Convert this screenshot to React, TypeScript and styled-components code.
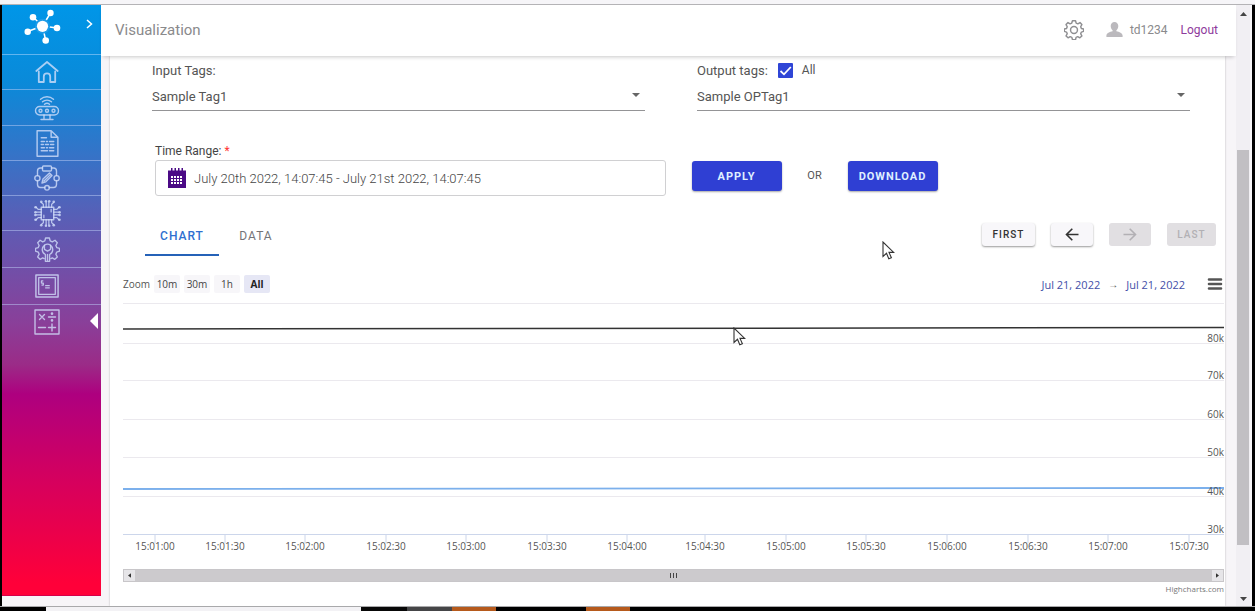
import React from "react";
import styled, { createGlobalStyle, css } from "styled-components";

const GlobalStyle = createGlobalStyle`
  *, *::before, *::after { box-sizing: border-box; }
  body { margin: 0; background: #f7f5f8; font-family: Roboto, "Liberation Sans", sans-serif; }
  button, input, select { font-family: inherit; margin: 0; }
  a { text-decoration: none; }
`;

const chartFont = css`
  font-family: "Open Sans", "Noto Sans", sans-serif;
`;

const Screen = styled.div`
  position: relative;
  display: flex;
  flex-direction: column;
  min-height: 100vh;
  color: #555;
`;

const TopEdge = styled.div`
  height: 5px;
  background: #f6f5f8;
  border-bottom: 1px solid #b4b3b6;
`;

const Frame = styled.div`
  flex: 1;
  display: flex;
  border-left: 2px solid #000;
  border-right: 3px solid #000;
`;

const BottomEdge = styled.div`
  display: flex;
  height: 5px;
  background: #000;
  border-top: 1px solid #a9a9ab;
`;

const Segment = styled.span<{ $w: number; $c: string }>`
  width: ${(p) => p.$w}px;
  background: ${(p) => p.$c};
`;

/* ---------- sidebar ---------- */

const Sidebar = styled.nav`
  width: 99px;
  flex: none;
  margin-bottom: 10px;
  border-bottom: 1px solid #d4004a;
  background: linear-gradient(
    180deg,
    #0096e8 0%,
    #0a8ad9 13%,
    #3474c8 25%,
    #5f5bb3 38%,
    #8a3f99 54%,
    #9b2b87 61%,
    #ae007f 66%,
    #d4005f 80%,
    #ff0039 98%
  );
`;

const Brand = styled.div`
  display: flex;
  align-items: flex-start;
  justify-content: space-between;
  height: 50px;
  padding: 2px 8px 0 20px;
  border-bottom: 1px solid rgba(190, 220, 255, 0.5);
`;

const ExpandButton = styled.button`
  display: flex;
  padding: 12px 0;
  border: 0;
  background: none;
  color: #fff;
`;

const NavItem = styled.a<{ $h?: number; $active?: boolean }>`
  position: relative;
  display: flex;
  align-items: center;
  justify-content: center;
  height: ${(p) => p.$h ?? 35}px;
  padding-right: 9px;
  border-bottom: ${(p) => (p.$active ? "0" : "1px solid rgba(190, 205, 245, 0.5)")};
  color: rgba(210, 222, 250, 0.8);
`;

const ActiveMark = styled.span`
  position: absolute;
  right: 3px;
  top: 8px;
  border: solid transparent;
  border-width: 8px 8px 8px 0;
  border-right-color: #fff;
`;

const Icon = ({ children, size = 26 }: { children: React.ReactNode; size?: number }) => (
  <svg
    width={size}
    height={size}
    viewBox="0 0 26 26"
    fill="none"
    stroke="currentColor"
    strokeWidth="1.4"
    strokeLinejoin="round"
    strokeLinecap="round"
    aria-hidden="true"
  >
    {children}
  </svg>
);

const HomeIcon = () => (
  <Icon>
    <path d="M2.300 12 13 3l10.700 9" strokeWidth="1.800" />
    <path d="M4.800 12.500V23h5v-5.500a3.200 3.200 0 0 1 6.400 0V23h5V12.500" strokeWidth="1.800" />
  </Icon>
);
const RobotIcon = () => (
  <Icon>
    <path d="M6.500 4.200a10 10 0 0 1 13 0M8.500 6.800a7 7 0 0 1 9 0M10.500 9.200a4 4 0 0 1 5 0" />
    <rect x="1.500" y="11.500" width="23" height="8.500" rx="4.200" />
    <circle cx="6.500" cy="15.700" r="1.500" />
    <circle cx="13" cy="15.700" r="1.500" />
    <circle cx="19.500" cy="15.700" r="1.500" />
    <path d="M10 20v4M16 20v4M7 24.500h12" />
  </Icon>
);
const DocumentIcon = () => (
  <Icon size={27}>
    <path d="M3 .8h13.500L23 7v18.200H3zM16.500 .8V7H23" />
    <path d="M7 7.500h5M7 11h3m2 0h1m2 0h4M7 14h2m2 0h3m2 0h3M7 17h3m2 0h1m2 0h4M7 20h6m2 0h4" />
  </Icon>
);
const DesignIcon = () => (
  <Icon>
    <rect x="8.500" y="1" width="9" height="5" rx="1" />
    <path d="M8.500 3H6.500Q3.500 3 3.500 6v4.500M17.500 3h2q3 0 3 3v4.500M3.500 16v3.500q0 3 3 3h4.300M22.500 16v3.500q0 3-3 3h-4.300" />
    <circle cx="3.400" cy="13.200" r="2.600" />
    <circle cx="22.600" cy="13.200" r="2.600" />
    <circle cx="13" cy="22.800" r="2.300" />
    <path d="m8 18 1-4 6.500-6 2.500 2.500-6.200 6.300zM10 16l6-6" />
  </Icon>
);
const ChipIcon = () => (
  <Icon size={27}>
    <rect x="7" y="7" width="12" height="12" />
    <path d="M9 7V4L7 2.500M11.700 7V2M14.300 7V2M17 7V4l2-1.500M9 19v3l-2 1.500M11.700 19v5M14.300 19v5M17 19v3l2 1.500M7 9H4L2 7M7 11.700H2M7 14.300H2M7 17H4l-2 2M19 9h3l2-2M19 11.700h5M19 14.300h5M19 17h3l2 2M16.500 9v2.500M9.500 17v-2.500" strokeWidth="1.200" />
    <g fill="currentColor" stroke="none">
      <circle cx="7" cy="1.700" r="1.300" /><circle cx="11.500" cy="1.300" r="1.200" /><circle cx="14.700" cy="1.300" r="1.200" /><circle cx="19" cy="1.700" r="1.300" />
      <circle cx="7" cy="24.300" r="1.300" /><circle cx="11.500" cy="24.700" r="1.200" /><circle cx="14.700" cy="24.700" r="1.200" /><circle cx="19" cy="24.300" r="1.300" />
      <circle cx="1.500" cy="7" r="1.300" /><circle cx="1.300" cy="11.700" r="1.200" /><circle cx="1.300" cy="14.500" r="1.200" /><circle cx="1.500" cy="19" r="1.300" />
      <circle cx="24.500" cy="7" r="1.300" /><circle cx="24.700" cy="11.700" r="1.200" /><circle cx="24.700" cy="14.500" r="1.200" /><circle cx="24.500" cy="19" r="1.300" />
    </g>
  </Icon>
);
const gearPath =
  "M11 1h4l.8 3 2.200 1 2.800-1.600 2.400 2.600-1.500 2.800.9 2.200 2.900.8v3l-2.900.9-.9 2.200 1.500 2.800-2.600 2.500-2.700-1.500-2.200.9-.7 2.900h-4l-.8-2.900-2.200-.9-2.700 1.500-2.600-2.500 1.500-2.800-.9-2.200-2.900-.9v-3l2.900-.8.9-2.200-1.500-2.800 2.500-2.600 2.700 1.600 2.200-1z";
const ServiceIcon = () => (
  <Icon size={25}>
    <path d="M9.500 22.500 8 21.800l-2.700 1.400-2.500-2.500 1.500-2.800-.9-2.200-2.900-.9v-3l2.900-.8.9-2.200-1.500-2.800 2.500-2.600L8 5l2.200-1L11 1h4l.8 3L18 5l2.800-1.600 2.400 2.600-1.500 2.800.9 2.200 2.900.8v3l-2.900.9-.9 2.200 1.500 2.800-2.600 2.500L18 21.800l-1.500.7" />
    <path d="M10.800 25.300v-7.100a5.700 5.700 0 0 1-1-9.700v4.300l3.200 1.800 3.200-1.800V8.500a5.700 5.700 0 0 1-1 9.700v7.100zM13 18v7" />
    <path d="M9.800 8.500a5.500 5.500 0 0 1 6.400 0" />
  </Icon>
);
const ConsoleIcon = () => (
  <Icon size={24}>
    <rect x="1" y="1" width="24" height="24" strokeWidth="1.600" />
    <rect x="4" y="4" width="18" height="18" />
    <path d="M9 7.500H7v2.300h2V12H7M11 12.500h5M11 15h5" strokeLinecap="butt" />
  </Icon>
);
const CalcIcon = () => (
  <Icon>
    <rect x="1" y="1" width="24" height="24" />
    <path d="m5.500 5.500 5 5m0-5-5 5M14.500 8h7M4.500 18.500h7M14.500 18.500h7M18 15v7" />
    <path d="M18 4.500v.3M18 11.200v.3" strokeWidth="2.600" />
  </Icon>
);

/* ---------- header ---------- */

const Main = styled.div`
  flex: 1;
  min-width: 0;
  display: flex;
  flex-direction: column;
`;

const Header = styled.header`
  position: relative;
  display: flex;
  align-items: center;
  height: 51px;
  padding: 0 18px 2px 14px;
  background: #fff;
  box-shadow: 0 3px 4px -2px rgba(0, 0, 0, 0.22);
  color: #8a8a8c;
`;

const Title = styled.h1`
  flex: 1;
  margin: 0;
  font-size: 15px;
  font-weight: 400;
  line-height: 20px;
`;

const IconButton = styled.button`
  display: flex;
  padding: 0;
  border: 0;
  background: none;
  color: #8f8f92;
`;

const User = styled.span`
  display: flex;
  align-items: center;
  gap: 7px;
  margin: 0 13px 0 22px;
  font-size: 12px;
`;

const Logout = styled.a`
  font-size: 12px;
  color: #8e3a9c;
`;

/* ---------- form ---------- */

const Card = styled.main`
  flex: 1;
  margin: 0 11px 0 9px;
  padding-top: 4px;
  background: #fff;
  box-shadow: 0 0 2px rgba(0, 0, 0, 0.25);
`;

const TagGrid = styled.div`
  display: grid;
  grid-template-columns: 1fr 1fr;
  gap: 52px;
  padding: 0 35px 0 42px;
`;

const LabelRow = styled.div`
  display: flex;
  align-items: center;
  height: 20px;
  font-size: 13px;
`;

const Check = styled.input`
  appearance: none;
  width: 15px;
  height: 15px;
  margin: 0 9px 0 10px;
  border-radius: 1px;
  background: #2f45d6
    url("data:image/svg+xml,%3Csvg xmlns='http://www.w3.org/2000/svg' viewBox='0 0 15 15'%3E%3Cpath d='M2.500 8 6 11.300 12.800 4' fill='none' stroke='white' stroke-width='1.800'/%3E%3C/svg%3E");
`;

const CheckLabel = styled.label`
  font-size: 12px;
`;

const SelectWrap = styled.div`
  display: flex;
  align-items: center;
  height: 31px;
  border-bottom: 1px solid #949496;
`;

const Select = styled.select`
  flex: 1;
  appearance: none;
  height: 30px;
  padding: 2px 0 0;
  border: 0;
  background: transparent url("data:image/svg+xml,%3Csvg xmlns='http://www.w3.org/2000/svg' viewBox='0 0 8 4'%3E%3Cpath d='M0 0h8L4 4z' fill='%23666'/%3E%3C/svg%3E")
    right 5px center / 8px 4px no-repeat;
  font-size: 13px;
  color: #555;
`;

const RangeSection = styled.section`
  padding: 31px 35px 0 45px;
`;

const RangeLabel = styled.label`
  display: block;
  font-size: 12px;
  line-height: 18px;
  color: #444;
`;

const Required = styled.span`
  color: #f33;
`;

const RangeRow = styled.div`
  display: flex;
  align-items: flex-start;
`;

const RangeBox = styled.div`
  display: flex;
  align-items: center;
  gap: 8px;
  width: calc(50% - 7px);
  height: 36px;
  margin-right: 26px;
  padding: 0 12px;
  border: 1px solid #d0d0d2;
  border-radius: 3px;
`;

const RangeInput = styled.input`
  flex: 1;
  min-width: 0;
  padding: 0;
  border: 0;
  background: none;
  font-size: 13px;
  font-weight: 300;
  color: #444;
`;

const Primary = styled.button`
  width: 90px;
  height: 30px;
  margin-top: 1px;
  padding: 0;
  border: 0;
  border-radius: 3px;
  background: #2f3fd3;
  box-shadow: 0 1px 2px rgba(0, 0, 0, 0.35);
  font-size: 11px;
  font-weight: 700;
  letter-spacing: 1px;
  color: #dff0ff;
`;

const Or = styled.span`
  width: 66px;
  text-align: center;
  font-size: 11px;
  line-height: 32px;
`;

/* ---------- tabs and paging ---------- */

const Toolbar = styled.div`
  display: flex;
  align-items: center;
  justify-content: space-between;
  margin-top: 20px;
  padding: 0 9px 0 35px;
`;

const Tabs = styled.div`
  display: flex;
`;

const Tab = styled.button<{ $on?: boolean }>`
  width: 74px;
  height: 40px;
  padding: 0;
  border: solid transparent;
  border-width: 2px 0;
  border-bottom-color: ${(p) => (p.$on ? "#2562b8" : "transparent")};
  background: none;
  font-size: 12px;
  font-weight: ${(p) => (p.$on ? 500 : 400)};
  letter-spacing: 1px;
  color: ${(p) => (p.$on ? "#2f6fd0" : "#747477")};
`;

const Pager = styled.div`
  display: flex;
  gap: 16px;
  margin-bottom: 4px;
`;

const PageButton = styled.button<{ $w: number }>`
  display: flex;
  align-items: center;
  justify-content: center;
  width: ${(p) => p.$w}px;
  height: 23px;
  padding: 0;
  border: 0;
  border-radius: 3px;
  background: #f8f7fa;
  box-shadow: 0 1px 2px rgba(0, 0, 0, 0.4);
  font-size: 10px;
  font-weight: 500;
  letter-spacing: 1px;
  color: #333;
  &:disabled {
    background: #e1dfe2;
    box-shadow: none;
    color: #b2b0b4;
  }
`;

/* ---------- chart ---------- */

const ChartSection = styled.section`
  padding: 19px 1px 0 13px;
  ${chartFont}
`;

const ChartControls = styled.div`
  display: flex;
  align-items: center;
  gap: 4px;
  height: 18px;
  font-size: 10px;
  color: #555;
`;

const ZoomButton = styled.button<{ $on?: boolean }>`
  width: 26px;
  height: 18px;
  padding: 0;
  border: 0;
  border-radius: 2px;
  background: ${(p) => (p.$on ? "#e6e7f5" : "#f7f6f9")};
  font-size: 10px;
  font-weight: ${(p) => (p.$on ? 700 : 400)};
  color: ${(p) => (p.$on ? "#222" : "#444")};
`;

const Dates = styled.div`
  display: flex;
  align-items: center;
  gap: 8px;
  margin-left: auto;
  margin-right: 18px;
`;

const DateText = styled.button`
  padding: 0;
  border: 0;
  background: none;
  font-size: 11px;
  color: #4450a8;
`;

const Plot = styled.svg`
  display: block;
  width: 100%;
  height: 265px;
  font-size: 10px;
  fill: #555;
`;

const Navigator = styled.div`
  display: flex;
  justify-content: space-between;
  align-items: center;
  height: 13px;
  margin-top: 11px;
  border: 1px solid #c8c6c9;
  background: #cccacd;
`;

const StepButton = styled.button`
  display: flex;
  align-items: center;
  justify-content: center;
  width: 11px;
  height: 11px;
  padding: 0;
  border: 0;
  background: #e6e5e8;
`;

const Credits = styled.a`
  display: block;
  text-align: right;
  font-size: 8px;
  line-height: 14px;
  color: #777;
`;

/* ---------- page scrollbar ---------- */

const Scrollbar = styled.div`
  display: flex;
  flex-direction: column;
  align-items: center;
  width: 14px;
  flex: none;
  margin-right: 2px;
  padding: 7px 0 5px;
  background: #f1eff3;
`;

const Track = styled.div`
  flex: 1;
  display: flex;
  flex-direction: column;
`;

const Thumb = styled.div`
  width: 12px;
  flex: 394;
  background: #c1bfc3;
`;

const Gap = styled.div<{ $f: number }>`
  flex: ${(p) => p.$f};
`;

const Cursor = styled.svg<{ $x: number; $y: number }>`
  position: absolute;
  left: ${(p) => p.$x}px;
  top: ${(p) => p.$y}px;
  pointer-events: none;
`;

const pct = (x: number) => `${((x - 123) / 1101) * 100}%`;

const ticks: [string, number][] = [
  ["15:01:00", 155], ["15:01:30", 225], ["15:02:00", 305], ["15:02:30", 386],
  ["15:03:00", 466], ["15:03:30", 547], ["15:04:00", 627], ["15:04:30", 705],
  ["15:05:00", 786], ["15:05:30", 866], ["15:06:00", 947], ["15:06:30", 1028],
  ["15:07:00", 1108], ["15:07:30", 1189],
];

const gridLines: [string, number][] = [
  ["", 10], ["80k", 50], ["70k", 87], ["60k", 126], ["50k", 164], ["40k", 203], ["30k", 241],
];

const Pointer = ({ x, y }: { x: number; y: number }) => (
  <Cursor $x={x} $y={y} width="13" height="20" viewBox="0 0 13 20" aria-hidden="true">
    <path d="M1 1v14.500l3.500-3.200 2.300 5.500 2.600-1.100-2.400-5.300h4.700z" fill="#fff" stroke="#333" strokeWidth="1.100" />
  </Cursor>
);

export default function App() {
  return (
    <Screen>
      <GlobalStyle />
      <TopEdge />
      <Frame>
        <Sidebar aria-label="Main">
          <Brand>
            <svg width="42" height="40" viewBox="0 0 42 40" aria-hidden="true">
              <path d="M20.500 19 28.500 6M20.500 19 11 10M20.500 19 5.500 24.500M20.500 19 35 21M20.500 19 23.700 33.500" stroke="#fff" strokeWidth="1.500" />
              <circle cx="20.500" cy="19.300" r="7.500" fill="#1c9ce8" />
              <g fill="#fff">
                <circle cx="20.500" cy="19.300" r="5.600" />
                <circle cx="28.500" cy="6" r="3.200" />
                <circle cx="11" cy="10.300" r="3.300" />
                <circle cx="5.700" cy="24.700" r="3.200" />
                <circle cx="35" cy="21" r="3.300" />
                <circle cx="23.700" cy="33.500" r="3.300" />
              </g>
            </svg>
            <ExpandButton aria-label="Expand menu">
              <svg width="7" height="10" viewBox="0 0 7 10"><path d="m1 1 4.500 4L1 9" fill="none" stroke="currentColor" strokeWidth="1.500" /></svg>
            </ExpandButton>
          </Brand>
          <NavItem href="#home" aria-label="Home"><HomeIcon /></NavItem>
          <NavItem $h={36} href="#devices" aria-label="Devices"><RobotIcon /></NavItem>
          <NavItem href="#reports" aria-label="Reports"><DocumentIcon /></NavItem>
          <NavItem href="#design" aria-label="Design"><DesignIcon /></NavItem>
          <NavItem href="#models" aria-label="Models"><ChipIcon /></NavItem>
          <NavItem $h={37} href="#service" aria-label="Service"><ServiceIcon /></NavItem>
          <NavItem $h={37} href="#console" aria-label="Console"><ConsoleIcon /></NavItem>
          <NavItem $h={33} $active href="#visualization" aria-label="Visualization">
            <CalcIcon />
            <ActiveMark />
          </NavItem>
        </Sidebar>

        <Main>
          <Header>
            <Title>Visualization</Title>
            <IconButton aria-label="Settings">
              <svg width="20" height="20" viewBox="0 0 26 26" fill="none" stroke="currentColor" strokeWidth="1.900" strokeLinejoin="round">
                <path d={gearPath} />
                <circle cx="13" cy="13" r="4.500" />
              </svg>
            </IconButton>
            <User>
              <svg width="17" height="15" viewBox="0 0 17 15" fill="#bbb9bd" aria-hidden="true">
                <path d="M8.500 0c2.300 0 3.800 1.700 3.800 4 0 1.700-.8 3.300-1.900 4.200v1c2.800.7 6.200 1.600 6.200 4.400V15H.4v-1.400c0-2.800 3.400-3.700 6.200-4.400v-1C5.500 7.300 4.700 5.700 4.700 4c0-2.300 1.500-4 3.800-4z" />
              </svg>
              td1234
            </User>
            <Logout href="#logout">Logout</Logout>
          </Header>

          <Card>
            <TagGrid>
              <div>
                <LabelRow><label htmlFor="input-tag">Input Tags:</label></LabelRow>
                <SelectWrap>
                  <Select id="input-tag"><option>Sample Tag1</option></Select>
                </SelectWrap>
              </div>
              <div>
                <LabelRow>
                  <label htmlFor="output-tag">Output tags:</label>
                  <Check id="all-tags" type="checkbox" defaultChecked />
                  <CheckLabel htmlFor="all-tags">All</CheckLabel>
                </LabelRow>
                <SelectWrap>
                  <Select id="output-tag"><option>Sample OPTag1</option></Select>
                </SelectWrap>
              </div>
            </TagGrid>

            <RangeSection>
              <RangeLabel htmlFor="range">Time Range: <Required>*</Required></RangeLabel>
              <RangeRow>
                <RangeBox>
                  <svg width="18" height="20" viewBox="0 0 18 20" aria-hidden="true">
                    <path d="M0 2.500h18V20H0zM3 0h1.500v3H3zM6.500 0H8v3H6.500zM10 0h1.500v3H10zM13.500 0H15v3h-1.500z" fill="#4b0a86" />
                    <g fill="#fff">
                      {[8, 11, 14].map((y) =>
                        [3, 6, 9, 12].map((x) => <rect key={`${x}-${y}`} x={x} y={y} width="2" height="2" />)
                      )}
                    </g>
                  </svg>
                  <RangeInput id="range" defaultValue="July 20th 2022, 14:07:45 - July 21st 2022, 14:07:45" />
                </RangeBox>
                <Primary>APPLY</Primary>
                <Or>OR</Or>
                <Primary>DOWNLOAD</Primary>
              </RangeRow>
            </RangeSection>

            <Toolbar>
              <Tabs role="tablist">
                <Tab $on role="tab" aria-selected="true">CHART</Tab>
                <Tab role="tab" aria-selected="false">DATA</Tab>
              </Tabs>
              <Pager>
                <PageButton $w={53}>FIRST</PageButton>
                <PageButton $w={42} aria-label="Previous">
                  <svg width="14" height="13" viewBox="0 0 14 13" fill="none" stroke="currentColor" strokeWidth="1.600"><path d="M13.500 6.500H1.500M7.300.7 1.500 6.500l5.800 5.800" /></svg>
                </PageButton>
                <PageButton $w={42} disabled aria-label="Next">
                  <svg width="14" height="13" viewBox="0 0 14 13" fill="none" stroke="currentColor" strokeWidth="1.600"><path d="M.5 6.500h12M6.700.7l5.800 5.800-5.800 5.800" /></svg>
                </PageButton>
                <PageButton $w={49} disabled>LAST</PageButton>
              </Pager>
            </Toolbar>

            <ChartSection>
              <ChartControls>
                <span>Zoom</span>
                <ZoomButton>10m</ZoomButton>
                <ZoomButton>30m</ZoomButton>
                <ZoomButton>1h</ZoomButton>
                <ZoomButton $on>All</ZoomButton>
                <Dates>
                  <DateText>Jul 21, 2022</DateText>
                  <span>→</span>
                  <DateText>Jul 21, 2022</DateText>
                </Dates>
                <IconButton aria-label="Chart menu">
                  <svg width="17" height="12" viewBox="0 0 17 12" stroke="#555" strokeWidth="2.600" strokeLinecap="round"><path d="M2 1.500h12M2 6h12M2 10.500h12" /></svg>
                </IconButton>
              </ChartControls>

              <Plot role="img" aria-label="Tag values over time">
                {gridLines.map(([label, y], i) => (
                  <line key={y} x1="0" x2="100%" y1={y + 0.5} y2={y + 0.5} stroke={i === 6 ? "#ccd6eb" : "#ebe9ee"} />
                ))}
                {ticks.map(([label, x]) => (
                  <g key={label}>
                    <line x1={pct(x)} x2={pct(x)} y1="241" y2="250" stroke="#ccd6eb" />
                    <text x={pct(x)} y="257" textAnchor="middle">{label}</text>
                  </g>
                ))}
                <line x1="0" x2="100%" y1="36" y2="34.500" stroke="#333" strokeWidth="1.500" />
                <line x1="0" x2="100%" y1="196" y2="195" stroke="#7cb0ec" strokeWidth="1.800" />
                {gridLines.map(([label, y]) => (
                  <text key={y} x="100%" y={y - 1} textAnchor="end">{label}</text>
                ))}
              </Plot>

              <Navigator>
                <StepButton aria-label="Scroll left"><svg width="3" height="5" viewBox="0 0 4 6"><path d="M4 0v6L0 3z" fill="#333" /></svg></StepButton>
                <svg width="7" height="5" viewBox="0 0 7 5" stroke="#444"><path d="M.5 0v5M3.500 0v5M6.500 0v5" /></svg>
                <StepButton aria-label="Scroll right"><svg width="3" height="5" viewBox="0 0 4 6"><path d="M0 0v6l4-3z" fill="#333" /></svg></StepButton>
              </Navigator>
              <Credits href="#highcharts">Highcharts.com</Credits>
            </ChartSection>
          </Card>
        </Main>

        <Scrollbar aria-hidden="true">
          <svg width="7" height="4" viewBox="0 0 7 4"><path d="M0 4h7L3.500 0z" fill="#444" /></svg>
          <Track>
            <Gap $f={134} />
            <Thumb />
            <Gap $f={52} />
          </Track>
          <svg width="7" height="4" viewBox="0 0 7 4"><path d="M0 0h7L3.500 4z" fill="#444" /></svg>
        </Scrollbar>
      </Frame>
      <BottomEdge>
        <Segment $w={46} $c="#000" />
        <Segment $w={315} $c="#f3f2f5" />
        <Segment $w={46} $c="#080808" />
        <Segment $w={45} $c="#454547" />
        <Segment $w={44} $c="#b65a1c" />
        <Segment $w={90} $c="#000" />
        <Segment $w={44} $c="#b65a1c" />
      </BottomEdge>
      <Pointer x={882} y={241} />
      <Pointer x={733} y={327} />
    </Screen>
  );
}
